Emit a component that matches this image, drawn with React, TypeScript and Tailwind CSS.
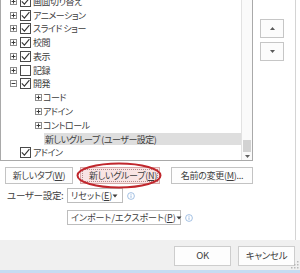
import React from "react";

type Row = {
  label: string;
  lvl: 0 | 1 | 2;
  exp?: "plus" | "minus";
  check?: boolean;
};

const rows: Row[] = [
  { label: "画面切り替え", lvl: 0, exp: "plus", check: true },
  { label: "アニメーション", lvl: 0, exp: "plus", check: true },
  { label: "スライド ショー", lvl: 0, exp: "plus", check: true },
  { label: "校閲", lvl: 0, exp: "plus", check: true },
  { label: "表示", lvl: 0, exp: "plus", check: true },
  { label: "記録", lvl: 0, exp: "plus", check: false },
  { label: "開発", lvl: 0, exp: "minus", check: true },
  { label: "コード", lvl: 1, exp: "plus" },
  { label: "アドイン", lvl: 1, exp: "plus" },
  { label: "コントロール", lvl: 1, exp: "plus" },
  { label: "新しいグループ (ユーザー設定)", lvl: 2 },
  { label: "アドイン", lvl: 0, check: true },
];

const Expander = ({ minus }: { minus?: boolean }) => (
  <svg width="7" height="7" viewBox="0 0 7 7" className="shrink-0">
    <rect x="0.5" y="0.5" width="6" height="6" fill="white" stroke="#8c8c8c" />
    <path d="M1.5 3.5h4" stroke="#3a3a3a" />
    {!minus && <path d="M3.5 1.5v4" stroke="#3a3a3a" />}
  </svg>
);

const CheckBox = ({ checked }: { checked?: boolean }) => (
  <svg width="11" height="11" viewBox="0 0 11 11" className="shrink-0">
    <rect x="0.5" y="0.5" width="10" height="10" fill="white" stroke="#4a4a4a" />
    {checked && <path d="M1.8 5.4l2.6 2.7L9.4 2.2" fill="none" stroke="#333" strokeWidth="1.1" />}
  </svg>
);

const Info = () => (
  <svg width="8" height="8" viewBox="0 0 8 8" className="shrink-0">
    <circle cx="4" cy="4" r="3.4" fill="none" stroke="#8db1dc" strokeWidth="0.8" />
    <path d="M4 3.4v2.4" stroke="#8db1dc" strokeWidth="0.9" />
    <circle cx="4" cy="2.3" r="0.5" fill="#8db1dc" />
  </svg>
);

const Caret = () => (
  <svg width="6" height="4" viewBox="0 0 6 4" className="shrink-0">
    <path d="M0.5 0.5h5L3 3.5z" fill="#3c3c3c" />
  </svg>
);

function TreeRow({ r }: { r: Row }) {
  if (r.lvl === 2) {
    return (
      <div className="h-[13.8px] flex items-center pl-[43px]">
        <div className="h-[12px] flex-1 flex items-center bg-[#dedede] pl-[1px] whitespace-nowrap">{r.label}</div>
      </div>
    );
  }
  if (r.lvl === 1) {
    return (
      <div className="h-[13.8px] flex items-center pl-[34px] whitespace-nowrap">
        <Expander />
        <span className="ml-[1px]">{r.label}</span>
      </div>
    );
  }
  return (
    <div className="h-[13.8px] flex items-center pl-[9px] whitespace-nowrap">
      <div className="w-[10px] shrink-0">{r.exp && <Expander minus={r.exp === "minus"} />}</div>
      <CheckBox checked={r.check} />
      <span className="ml-[2px]">{r.label}</span>
    </div>
  );
}

export default function App() {
  return (
    <div className="relative w-[300px] h-[273px] overflow-hidden bg-white flex flex-col text-[9px] leading-none text-[#3d3d3d] font-['Noto_Sans_CJK_JP','Noto_Sans',sans-serif] [font-feature-settings:'palt'] tracking-[-0.3px]">
      <div className="h-[240px] flex shrink-0">
        <div className="w-[296px] border-r border-[#d4d4d4] flex flex-col">
          {/* list + move buttons */}
          <div className="h-[161px] flex shrink-0">
            <div className="w-[253px] border-l border-r border-b border-[#a9a9a9] flex overflow-hidden tracking-[-0.5px]">
              <div className="flex-1 overflow-hidden">
                <div className="mt-[-5.7px] flex flex-col">
                  {rows.map((r, i) => (
                    <TreeRow key={i} r={r} />
                  ))}
                </div>
              </div>
              <div className="w-[11px] border-l border-[#e2e2e2] bg-[#fafafa] flex flex-col">
                <div className="flex-1" />
                <div className="h-[12px] mx-[1px] bg-[#d2d2d2]" />
                <div className="h-[8px] flex items-center justify-center">
                  <svg width="5" height="3" viewBox="0 0 5 3">
                    <path d="M0 0h5L2.5 3z" fill="#606060" />
                  </svg>
                </div>
              </div>
            </div>
            <div className="flex-1 flex flex-col pl-[7px] pt-[19px] gap-[4px]">
              <div className="w-[24px] h-[19px] border border-[#c6c6c6] bg-[#fcfcfc] flex items-center justify-center">
                <svg width="5" height="3" viewBox="0 0 5 3">
                  <path d="M0 3h5L2.5 0z" fill="#5a5a5a" />
                </svg>
              </div>
              <div className="w-[24px] h-[19px] border border-[#c6c6c6] bg-[#fcfcfc] flex items-center justify-center">
                <svg width="5" height="3" viewBox="0 0 5 3">
                  <path d="M0 0h5L2.5 3z" fill="#5a5a5a" />
                </svg>
              </div>
            </div>
          </div>

          {/* group buttons */}
          <div className="mt-[6px] flex pl-[5px] h-[17px]">
            <div className="w-[68px] border border-[#c3c3c3] bg-[#fdfdfd] flex items-center justify-center whitespace-nowrap">
              新しいタブ(<span className="underline">W</span>)
            </div>
            <div className="ml-[7px] w-[80px] border border-[#d7a9a9] bg-[#f8e4e4] p-[1px] flex">
              <div className="flex-1 border border-dotted border-[#b58c8c] flex items-center pl-[6px] whitespace-nowrap overflow-hidden">
                新しいグループ(<span className="underline">N</span>)
              </div>
            </div>
            <div className="ml-[11px] w-[82px] border border-[#c3c3c3] bg-[#fdfdfd] flex items-center justify-center whitespace-nowrap">
              名前の変更(<span className="underline">M</span>)...
            </div>
          </div>

          {/* user settings */}
          <div className="mt-[4px] flex items-center h-[15px]">
            <div className="w-[67px] pl-[7px] whitespace-nowrap text-[9.5px]">ユーザー設定:</div>
            <div className="w-[56px] h-full border border-[#bdbdbd] bg-white flex items-center justify-between pl-[3px] pr-[5px] whitespace-nowrap tracking-normal">
              <span>
                リセット(<span className="underline">E</span>)
              </span>
              <Caret />
            </div>
            <div className="ml-[4px]">
              <Info />
            </div>
          </div>
          <div className="mt-[7px] flex items-center h-[15px] pl-[67px]">
            <div className="w-[114px] h-full border border-[#bdbdbd] bg-white flex items-center justify-between pl-[3px] pr-[5px] whitespace-nowrap tracking-normal">
              <span>
                インポート/エクスポート(<span className="underline">P</span>)
              </span>
              <Caret />
            </div>
            <div className="ml-[4px]">
              <Info />
            </div>
          </div>
        </div>
      </div>

      {/* footer */}
      <div className="flex-1 bg-[#f0f0f0] flex justify-end items-start pt-[6px] pr-[5px] gap-[7px] text-[9.5px]">
        <div className="w-[57px] h-[20px] border border-[#cdcdcd] bg-[#fdfdfd] flex items-center justify-center">OK</div>
        <div className="w-[57px] h-[20px] border border-[#cdcdcd] bg-[#fdfdfd] flex items-center justify-center">キャンセル</div>
      </div>
      <div className="h-[3px] bg-[#c6dcf2] shrink-0" />

      {/* red annotation ellipse */}
      <svg className="absolute left-[76px] top-[162px]" width="86" height="27" viewBox="0 0 86 27">
        <ellipse cx="43" cy="13.5" rx="41.5" ry="12" fill="none" stroke="#c0272d" strokeWidth="2" />
      </svg>

      {/* resize grip */}
      <svg className="absolute right-[1px] bottom-[4px]" width="8" height="8" viewBox="0 0 8 8">
        <rect x="6" y="0" width="1.5" height="1.5" fill="#b8b8b8" />
        <rect x="3" y="3" width="1.5" height="1.5" fill="#b8b8b8" />
        <rect x="6" y="3" width="1.5" height="1.5" fill="#b8b8b8" />
        <rect x="0" y="6" width="1.5" height="1.5" fill="#b8b8b8" />
        <rect x="3" y="6" width="1.5" height="1.5" fill="#b8b8b8" />
        <rect x="6" y="6" width="1.5" height="1.5" fill="#b8b8b8" />
      </svg>
    </div>
  );
}
